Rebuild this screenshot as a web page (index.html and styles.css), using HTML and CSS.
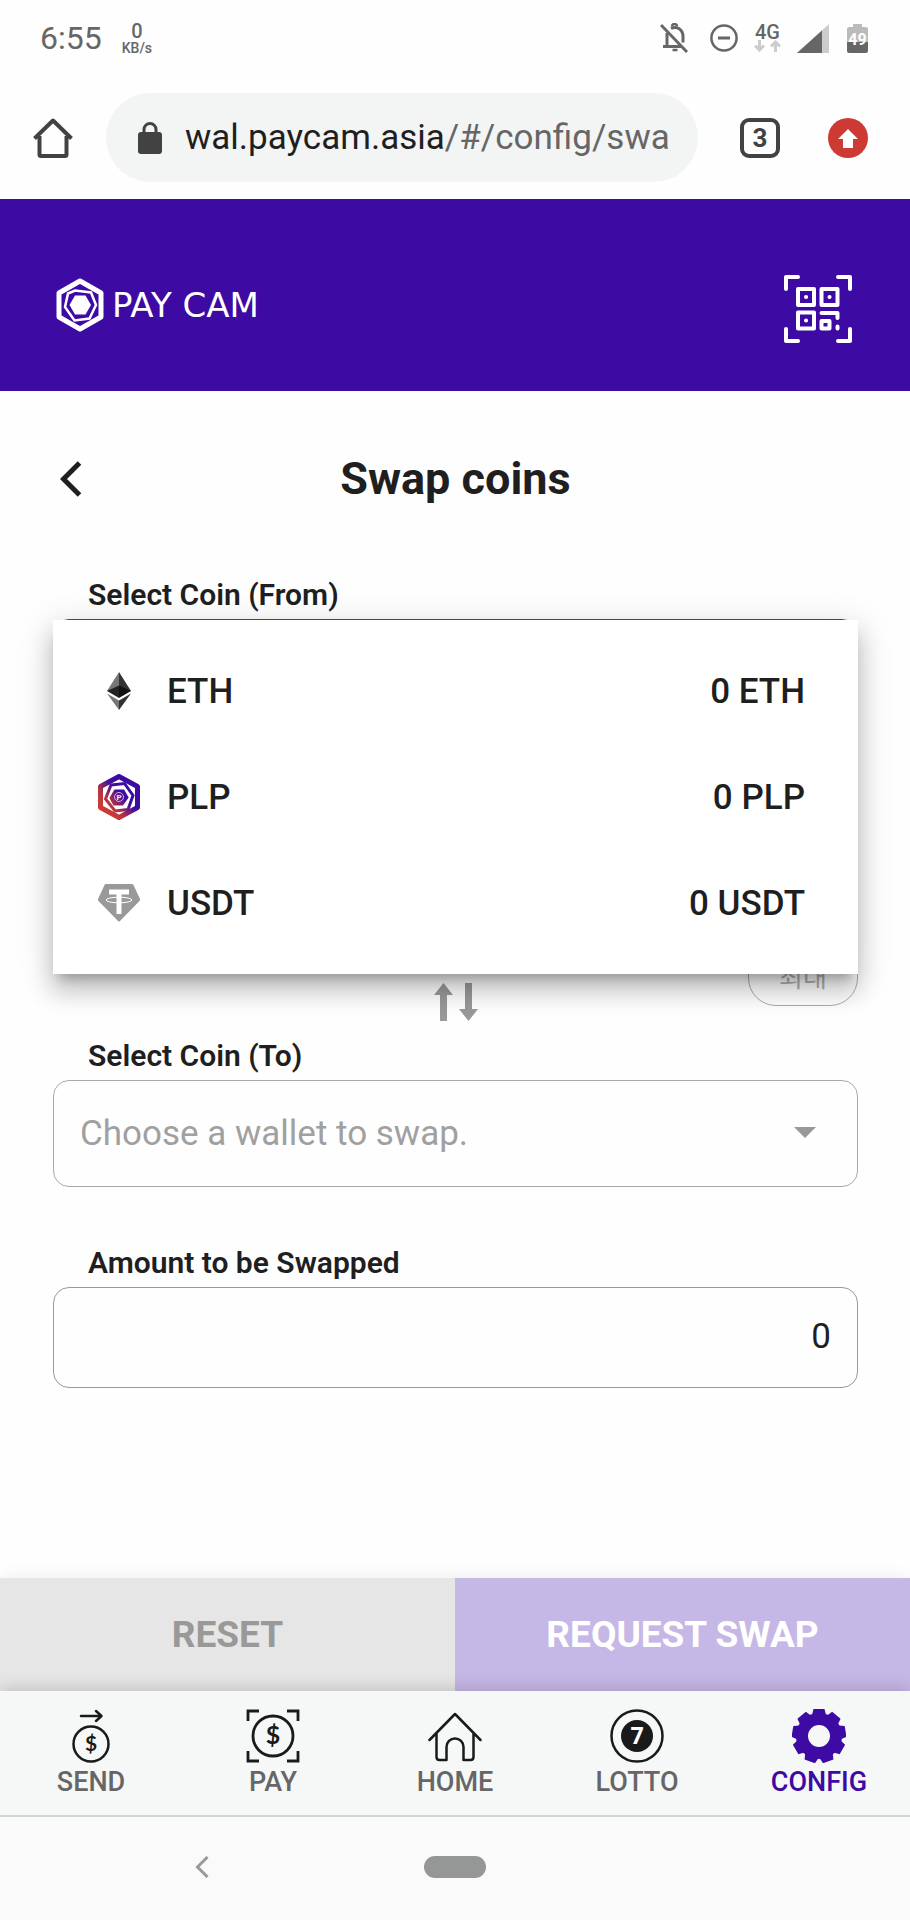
FILE: index.html
```html
<!DOCTYPE html>
<html lang="en">
<head>
    <meta charset="UTF-8">
    <meta name="viewport" content="width=device-width, initial-scale=1.0">
    <title>Swap coins</title>
    <link rel="stylesheet" href="styles.css">
</head>
<body>
    <div class="status-bar">
        <span class="time">6:55</span>
        <span class="speed"><b>0</b><small>KB/s</small></span>
        <span class="status-icons">
            <svg class="bell" width="28" height="30" viewBox="0 0 28 30" fill="none" stroke="#666" stroke-width="3">
                <path d="M1 2 27 29"/>
                <path d="M7 10v13M3 23.500h18M11 5.500c6-3 12 1 12 8v6"/>
                <path d="M12 3.500a2.500 2.500 0 0 1 5 0M12.500 27h5" stroke-width="2.500"/>
            </svg>
            <svg width="28" height="28" viewBox="0 0 28 28" fill="none" stroke="#666" stroke-width="2.500">
                <circle cx="14" cy="14" r="12.600"/>
                <path d="M8 14h12" stroke-width="3"/>
            </svg>
            <span class="network">
                <b>4G</b>
                <svg width="27" height="12" viewBox="0 0 27 12" fill="none" stroke="#ccc" stroke-width="3">
                    <path d="M5.500 0v10M1 5.500l4.500 4.500L10 5.500M21.500 12V2M17 6.500 21.500 2 26 6.500"/>
                </svg>
            </span>
            <svg width="32" height="29" viewBox="0 0 32 29">
                <path d="M32 0v29H0z" fill="#ccc"/>
                <path d="M25 6.500V29H0z" fill="#666"/>
            </svg>
            <svg class="battery" width="21" height="29" viewBox="0 0 21 29">
                <path d="M6 0h9v3h4a2 2 0 0 1 2 2v13H0V5a2 2 0 0 1 2-2h4z" fill="#bbb"/>
                <path d="M0 18h21v9a2 2 0 0 1-2 2H2a2 2 0 0 1-2-2z" fill="#666"/>
                <text x="10.500" y="21" class="battery-text">49</text>
            </svg>
        </span>
    </div>

    <div class="browser-bar">
        <button class="icon-button" aria-label="Home page">
            <svg width="40" height="40" viewBox="0 0 40 40" fill="none" stroke="#424242" stroke-width="4" stroke-linejoin="round">
                <path d="M1.500 20.500 20 2.500l18.500 18M6.500 18v18.500q0 1.500 1.500 1.500h24q1.500 0 1.500-1.500V18"/>
            </svg>
        </button>
        <a class="address" href="#/config/swap">
            <svg width="24" height="32" viewBox="0 0 24 32">
                <rect y="10" width="24" height="22" rx="3" fill="#424242"/>
                <path d="M6 11V7.500a6 6 0 0 1 12 0V11" fill="none" stroke="#424242" stroke-width="3"/>
            </svg>
            <span class="url">wal.paycam.asia<i>/#/config/swa</i></span>
        </a>
        <button class="tabs">3</button>
        <button class="icon-button update" aria-label="Update">
            <svg width="40" height="40" viewBox="0 0 40 40">
                <circle cx="20" cy="20" r="20" fill="#cc3a33"/>
                <path d="M20 11 30 21h-5v9H15v-9h-5z" fill="#fff"/>
            </svg>
        </button>
    </div>

    <header class="header">
        <a class="logo" href="#/">
            <svg width="48" height="54" viewBox="0 0 48 54" fill="none" stroke="#fff">
                <path d="M24 3 45 15v24L24 51 3 39V15z" stroke-width="5" stroke-linejoin="round"/>
                <path d="M19 12.500 35 14.500 40 27 33.500 40.500 18.500 42.500 9 29 12 15.500z" stroke-width="2.500"/>
                <path d="M19 17.500h10.500l5.500 9.500-5.500 9.500H19L13.500 27z" fill="#fff" stroke="none"/>
            </svg>
            <span>PAY CAM</span>
        </a>
        <button class="icon-button" aria-label="Scan QR code">
            <svg width="68" height="68" viewBox="0 0 68 68" fill="none" stroke="#fff" stroke-width="4" stroke-linecap="round" stroke-linejoin="round">
                <path d="M2 14V2h12M54 2h12v12M66 54v12H54M14 66H2V54"/>
                <rect x="14" y="14" width="16" height="16"/>
                <rect x="37.500" y="14" width="16" height="16"/>
                <rect x="14" y="37.500" width="16" height="16"/>
                <path d="M37.500 38h16v5M53.500 51.500v2"/>
                <rect x="37.500" y="46" width="8" height="7.500"/>
                <path d="M22 22h.1M45.500 22h.1M22 45.500h.1"/>
            </svg>
        </button>
    </header>

    <main class="content">
        <div class="title-row">
            <button class="icon-button" aria-label="Back">
                <svg width="22" height="36" viewBox="0 0 22 36" fill="none" stroke="#1f1f1f" stroke-width="5">
                    <path d="M19.500 2 3.500 18l16 16"/>
                </svg>
            </button>
            <h1>Swap coins</h1>
        </div>

        <div class="field">
            <label for="fromCoin">Select Coin (From)</label>
            <div class="select-wrapper focused">
                <select id="fromCoin"></select>
                <ul class="menu">
                    <li>
                        <button>
                            <svg width="44" height="48" viewBox="0 0 44 48">
                                <path d="M22 5v20.500L10 24z" fill="#777"/>
                                <path d="M22 5v20.500L34 24z" fill="#333"/>
                                <path d="M22 18.500v12.500l-12-7z" fill="#222"/>
                                <path d="M22 18.500v12.500l12-7z" fill="#111"/>
                                <path d="M22 33.500V43L10 26.500z" fill="#777"/>
                                <path d="M22 33.500V43l12-16.500z" fill="#333"/>
                            </svg>
                            <span>ETH</span>
                            <span class="balance">0 ETH</span>
                        </button>
                    </li>
                    <li>
                        <button>
                            <svg width="44" height="48" viewBox="0 0 44 48" fill="none" stroke="url(#plp)">
                                <defs>
                                    <linearGradient id="plp" gradientUnits="userSpaceOnUse" x1="8" y1="36" x2="30" y2="16">
                                        <stop offset="0" stop-color="#cc3b33"/>
                                        <stop offset=".3" stop-color="#b43440"/>
                                        <stop offset=".75" stop-color="#3d0aa3"/>
                                    </linearGradient>
                                </defs>
                                <path d="M22 3.500 40.500 13.500v21L22 44.500 3.500 34.500v-21z" stroke-width="5" stroke-linejoin="round"/>
                                <path d="M14 12 27.500 10.500l8.500 12L31 36.500 18 38 8.500 26z" stroke-width="3"/>
                                <path d="M18 17.500h8.500l4 7-5 7H17L13.500 25z" fill="url(#plp)" stroke-width="2"/>
                                <circle cx="22" cy="24" r="4.500" stroke="#c9b8dd" stroke-width="1"/>
                                <text x="22" y="27" class="coin-letter">P</text>
                            </svg>
                            <span>PLP</span>
                            <span class="balance">0 PLP</span>
                        </button>
                    </li>
                    <li>
                        <button>
                            <svg width="44" height="48" viewBox="0 0 44 48">
                                <path d="M9 5h26q1 0 1.500 1L43 20q.5 1-.5 2L23 42q-1 1-2 0L1.500 22q-1-1-.5-2L7.500 6Q8 5 9 5z" fill="#999"/>
                                <path d="M12 10.500h20v5h-7.500V35h-5V15.500H12z" fill="#fff"/>
                                <ellipse cx="22" cy="21" rx="13" ry="2.800" fill="none" stroke="#fff"/>
                            </svg>
                            <span>USDT</span>
                            <span class="balance">0 USDT</span>
                        </button>
                    </li>
                </ul>
            </div>
        </div>

        <div class="swap-row">
            <svg class="swap-arrows" width="44" height="38" viewBox="0 0 44 38" fill="#999">
                <path d="M9.500 0 19 12h-6v26H6V12H0z"/>
                <path d="M34.500 38 25 26h6V0h7v26h6z"/>
            </svg>
            <button class="max-button">최대</button>
        </div>

        <div class="field">
            <label for="toCoin">Select Coin (To)</label>
            <div class="select-wrapper">
                <select id="toCoin">
                    <option>Choose a wallet to swap.</option>
                </select>
                <svg class="caret" width="22" height="11" viewBox="0 0 22 11"><path d="M0 0h22L11 11z" fill="#999"/></svg>
            </div>
        </div>

        <div class="field amount-field">
            <label for="amount">Amount to be Swapped</label>
            <input type="text" id="amount" inputmode="decimal" value="0">
        </div>
    </main>

    <div class="actions">
        <button class="reset">RESET</button>
        <button class="request">REQUEST SWAP</button>
    </div>

    <nav class="bottom-nav">
        <a href="#/send">
            <svg width="54" height="54" viewBox="0 0 54 54" fill="none" stroke="#1a1a1a" stroke-width="2.500" stroke-linecap="round" stroke-linejoin="round">
                <path d="M17 7h20M32 2l5.500 5L32 12"/>
                <circle cx="27" cy="35" r="17.500"/>
                <text x="27" y="42" class="dollar">$</text>
            </svg>
            <span>SEND</span>
        </a>
        <a href="#/pay">
            <svg width="54" height="54" viewBox="0 0 54 54" fill="none" stroke="#1a1a1a" stroke-width="2.800">
                <path d="M2 12V2h11M41 2h11v10M52 42v10H41M13 52H2V42"/>
                <circle cx="27" cy="27" r="20"/>
                <text x="27" y="35" class="dollar dollar-large">$</text>
            </svg>
            <span>PAY</span>
        </a>
        <a href="#/home">
            <svg width="54" height="54" viewBox="0 0 54 54" fill="none" stroke="#1a1a1a" stroke-width="2.500" stroke-linecap="round" stroke-linejoin="round">
                <path d="M1.500 31 27 5l25.500 26M8.500 24v24q0 3 3 3h7V38a8.500 8.500 0 0 1 17 0v13h7q3 0 3-3V24"/>
            </svg>
            <span>HOME</span>
        </a>
        <a href="#/lotto">
            <svg width="54" height="54" viewBox="0 0 54 54">
                <circle cx="27" cy="27" r="25.500" fill="none" stroke="#1a1a1a" stroke-width="2.500"/>
                <circle cx="27" cy="27" r="16" fill="#1a1a1a"/>
                <text x="27" y="35" class="lotto-number">7</text>
            </svg>
            <span>LOTTO</span>
        </a>
        <a href="#/config" class="active">
            <svg width="54" height="54" viewBox="0 0 54 54">
                <circle cx="27" cy="27" r="17" fill="none" stroke="#3d0aa3" stroke-width="12"/>
                <g fill="#3d0aa3">
                    <path id="tooth" d="M20 6 21.500 0h11L34 6z"/>
                    <use href="#tooth" transform="rotate(40 27 27)"/>
                    <use href="#tooth" transform="rotate(80 27 27)"/>
                    <use href="#tooth" transform="rotate(120 27 27)"/>
                    <use href="#tooth" transform="rotate(160 27 27)"/>
                    <use href="#tooth" transform="rotate(200 27 27)"/>
                    <use href="#tooth" transform="rotate(240 27 27)"/>
                    <use href="#tooth" transform="rotate(280 27 27)"/>
                    <use href="#tooth" transform="rotate(320 27 27)"/>
                </g>
            </svg>
            <span>CONFIG</span>
        </a>
    </nav>

    <div class="system-bar">
        <button class="icon-button system-back" aria-label="System back">
            <svg width="14" height="22" viewBox="0 0 14 22" fill="none" stroke="#999" stroke-width="3">
                <path d="M12.500 1 2.500 11l10 10"/>
            </svg>
        </button>
        <button class="home-pill" aria-label="System home"></button>
    </div>
</body>
</html>
```
FILE: styles.css
```css
* {
    box-sizing: border-box;
}

body {
    font-family: Roboto, "Noto Sans CJK KR", sans-serif;
    background-color: #fefefe;
    color: #1f1f1f;
    margin: 0;
    min-height: 100vh;
    display: flex;
    flex-direction: column;
}

a {
    color: inherit;
    text-decoration: none;
}

svg {
    display: block;
    flex-shrink: 0;
}

button, input, select {
    font-family: inherit;
    color: inherit;
    background: none;
    border: none;
    padding: 0;
    margin: 0;
}

.icon-button {
    display: block;
}

/* Phone status bar */
.status-bar {
    display: flex;
    align-items: center;
    height: 76px;
    padding: 0 42px 0 40px;
    color: #666;
}

.time {
    font-size: 32px;
}

.speed {
    display: flex;
    flex-direction: column;
    align-items: center;
    margin-left: 20px;
    line-height: 20px;
}

.speed b {
    font-size: 20px;
    font-weight: 500;
}

.speed small {
    font-size: 14px;
    font-weight: 500;
    line-height: 14px;
}

.status-icons {
    display: flex;
    align-items: center;
    gap: 16px;
    margin-left: auto;
}

.bell {
    margin-right: 6px;
}

.battery {
    margin-left: 2px;
}

.network {
    display: flex;
    flex-direction: column;
    align-items: center;
    font-size: 20px;
    line-height: 16px;
}

.network b {
    font-weight: 500;
}

.battery-text {
    font-size: 16px;
    font-weight: 700;
    fill: #fff;
    text-anchor: middle;
}

/* Browser bar */
.browser-bar {
    display: flex;
    align-items: center;
    padding: 17px 42px 17px 33px;
}

.address {
    flex: 1;
    min-width: 0;
    display: flex;
    align-items: center;
    gap: 23px;
    height: 89px;
    margin: 0 42px 0 33px;
    padding: 0 16px 0 32px;
    background-color: #f3f4f4;
    border-radius: 45px;
}

.url {
    overflow: hidden;
    white-space: nowrap;
    font-size: 35px;
}

.url i {
    font-style: normal;
    color: #666;
}

.tabs {
    width: 40px;
    height: 40px;
    border: 4px solid #424242;
    border-radius: 9px;
    color: #424242;
    font-size: 26px;
    font-weight: 700;
    line-height: 32px;
}

.update {
    margin-left: 48px;
}

/* Site header */
.header {
    display: flex;
    align-items: center;
    justify-content: space-between;
    height: 192px;
    padding: 28px 58px 0 56px;
    background-color: #3d0aa3;
    color: #fff;
}

.logo {
    display: flex;
    align-items: center;
    gap: 8px;
    margin-bottom: 8px;
    font-family: "DejaVu Sans", sans-serif;
    font-size: 34px;
}

/* Swap form */
.content {
    flex: 1;
    padding: 64px 52px 80px 53px;
}

.title-row {
    display: grid;
    grid-template-columns: 36px 1fr 36px;
    align-items: center;
    margin-bottom: 76px;
}

.title-row .icon-button {
    padding-left: 7px;
}

h1 {
    margin: 0;
    font-size: 45px;
    line-height: 48px;
    text-align: center;
}

label {
    display: block;
    padding: 0 35px;
    margin-bottom: 8px;
    font-size: 30px;
    font-weight: 600;
    line-height: 32px;
}

.select-wrapper {
    position: relative;
}

.field select, .field input {
    display: block;
    width: 100%;
    padding: 0 26px;
    border: 1px solid #999;
    border-radius: 16px;
    font-size: 35px;
}

.field select {
    appearance: none;
    height: 107px;
    border-color: #aaa;
    color: #a0a0a0;
    opacity: 1;
}

.field .focused select {
    border-color: #5a33ad;
}

.field input {
    height: 101px;
    padding-bottom: 2px;
    text-align: right;
}

.caret {
    position: absolute;
    top: 47px;
    right: 42px;
    pointer-events: none;
}

.menu {
    position: absolute;
    top: 1px;
    left: 0;
    right: 0;
    z-index: 1;
    margin: 0;
    padding: 18px 0;
    list-style: none;
    background-color: #fff;
    box-shadow: 0 11px 11px -7px rgba(0, 0, 0, 0.25),
                0 18px 22px 2px rgba(0, 0, 0, 0.14),
                0 7px 31px 4px rgba(0, 0, 0, 0.12);
}

.menu button {
    display: flex;
    align-items: center;
    gap: 26px;
    width: 100%;
    height: 106px;
    padding: 0 53px 0 44px;
    font-size: 35px;
    font-weight: 500;
}

.balance {
    margin-left: auto;
}

.swap-row {
    display: grid;
    grid-template-columns: 1fr auto 1fr;
    height: 77px;
    margin: 218px 0 19px;
}

.swap-arrows {
    grid-column: 2;
    align-self: end;
}

.max-button {
    justify-self: end;
    width: 110px;
    height: 62px;
    border: 1px solid #aaa;
    border-radius: 28px;
    color: #b0b0b0;
    font-size: 26px;
}

.amount-field {
    margin-top: 60px;
}

/* Form actions */
.actions {
    display: grid;
    grid-template-columns: 1fr 1fr;
    box-shadow: 0 0 16px rgba(0, 0, 0, 0.08);
}

.actions button {
    height: 113px;
    font-size: 37px;
    font-weight: 700;
}

.reset {
    background-color: #e6e6e6;
    color: #999;
}

.actions .request {
    background-color: #c6b8e6;
    color: #fff;
}

/* Bottom navigation */
.bottom-nav {
    position: relative;
    display: grid;
    grid-template-columns: repeat(5, 1fr);
    padding: 18px 0;
    background-color: #f6f7f7;
    border-bottom: 2px solid #d2d4d4;
    box-shadow: 0 -2px 16px rgba(0, 0, 0, 0.18);
}

.bottom-nav a {
    display: flex;
    flex-direction: column;
    align-items: center;
    gap: 4px;
    color: #666;
    font-size: 27px;
    font-weight: 500;
    line-height: 30px;
}

.bottom-nav .active {
    color: #3d0aa3;
}

.dollar {
    font-family: Lato, sans-serif;
    font-size: 21px;
    font-weight: 700;
    fill: #1a1a1a;
    stroke: none;
    text-anchor: middle;
}

.dollar-large {
    font-size: 25px;
}

.lotto-number {
    font-family: "Open Sans", sans-serif;
    font-size: 23px;
    font-weight: 700;
    fill: #fff;
    text-anchor: middle;
}

.coin-letter {
    font-size: 8px;
    font-weight: 700;
    fill: #eee;
    stroke: none;
    text-anchor: middle;
}

/* Phone navigation bar, sits over the bottom nav's shadow */
.system-bar {
    position: relative;
    display: grid;
    grid-template-columns: 1fr auto 1fr;
    align-items: center;
    height: 103px;
    padding-bottom: 4px;
    background-color: #fafafa;
}

.system-back {
    justify-self: center;
    margin-right: 20px;
}

.home-pill {
    width: 62px;
    height: 22px;
    border-radius: 11px;
    background-color: #959797;
}
```
